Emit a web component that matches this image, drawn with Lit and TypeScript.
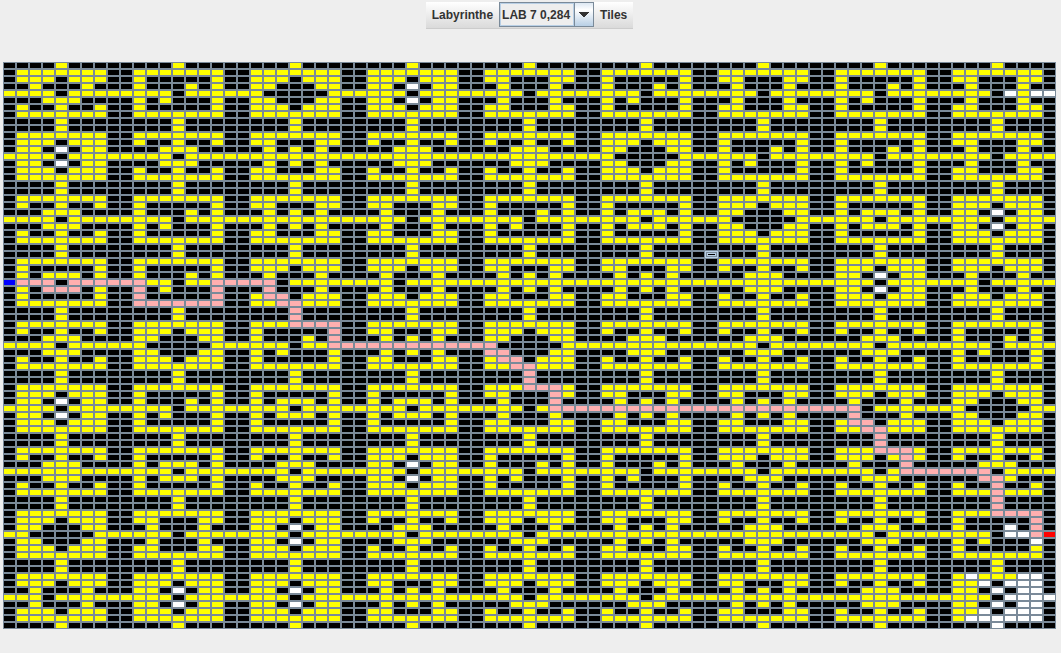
import { LitElement, html, css } from "lit";
import { customElement, state } from "lit/decorators.js";
import { classMap } from "lit/directives/class-map.js";

// Tile bodies: the five middle rows. Rows 0, 1, 7 and 8 are common to all tiles.
// '.' wall, '#' floor, 'W' unexplored floor, 'P' path, 'S' start, 'E' exit
const BODIES: Record<string, string[]> = {
  A: [".###.###.", "..#...#..", "####.####", "...###...", ".#..#..#."],
  B: [".#.....#.", ".#...#.#.", "####.####", ".#.#...#.", ".#.....#."],
  C: [".###.###.", ".##...##.", "##.....##", ".##...##.", ".###.###."],
  D: [".###.###.", ".##.W.##.", "####.####", ".##.W.##.", ".###.###."],
  E: [".#..#..#.", "...###...", "####.####", "...###...", ".#..#..#."],
  F: [".##...##.", "..#.#.#..", "#########", "..#.#.#..", ".##...##."],
  G: [".##...##.", "..#...#..", "####.####", "..#...#..", ".##...##."],
  H: [".#..#..#.", "...###...", "#########", "...###...", ".#..#..#."],
  I: [".#.....#.", ".#.###.#.", "####.####", ".#.###.#.", ".#.....#."],
  J: [".###.###.", "..#...#..", "###.#####", "..#...#..", ".###.###."],
};

const LAYOUT = [
  "ABCDGBGBG",
  "DEFHHCBBG",
  "EBFGBICID",
  "IBJJFFHDJ",
  "ECBFCHEEB",
  "DBIIGFFJC",
  "HIEDBBAAE",
  "CGDEAFHEB",
  "JDDFAAFHD",
];

// Rows of single tiles changed by the walk through the maze: "tileRow,tileCol" -> row -> cells
const WALK: Record<string, Record<number, string>> = {
  "0,8": { 4: "####.W#WW" },
  "3,0": { 4: "SPPP.PPPP", 5: ".#.PPP.#." },
  "3,1": { 4: "PP##.##PP", 5: ".P.#...P.", 6: ".P.....P.", 7: ".PPPPPPP." },
  "3,2": { 4: "PPP.#####", 5: "..P...#..", 6: ".#PP.###.", 7: ".##PP###.", 8: "....P...." },
  "4,2": { 0: "....P....", 1: ".###PPPP.", 2: ".#.....P.", 3: ".#...#.P.", 4: "####.##PP" },
  "4,3": { 4: "PPPPPPPPP" },
  "4,4": { 4: "PP.....##", 5: ".PP...##.", 6: ".#PP.###.", 7: ".##PP###.", 8: "....P...." },
  "5,4": { 0: "....P....", 1: ".###PPP#.", 2: ".##...P#.", 3: "..#...P..", 4: "####.#PPP" },
  "5,5": { 4: "PPPPPPPPP" },
  "5,6": { 4: "PPPPPPPPP" },
  "5,7": { 4: "PPP.#####", 5: "..P...#..", 6: ".#PP.###.", 7: ".##PP###.", 8: "....P...." },
  "6,7": { 0: "....P....", 1: ".###PPP#.", 2: ".###.#P#.", 3: "..#...P..", 4: "####.#PPP" },
  "6,8": { 4: "PPPP.####", 5: "...PP#...", 6: ".#..P..#.", 7: ".###P###.", 8: "....P...." },
  "7,8": { 0: "....P....", 1: ".###PPPP.", 2: ".#.....P.", 3: ".#...W.P.", 4: "####.WWPE", 5: ".#.#...W." },
  "8,8": {
    1: ".#W###WW.", 2: ".##W.WWW.", 3: ".##.W.WW.", 4: "####.WWWW",
    5: ".##.W.WW.", 6: ".##W.WWW.", 7: ".#WWWWWW.", 8: "....W....",
  },
};

const SIZE = 81;

function buildMaze(): string {
  let cells = "";
  for (let y = 0; y < SIZE; y++) {
    const tr = Math.floor(y / 9);
    for (let tc = 0; tc < 9; tc++) {
      const edge = "....#....";
      const ring = ".#######.";
      const rows = [edge, ring, ...BODIES[LAYOUT[tr][tc]], ring, edge];
      cells += WALK[`${tr},${tc}`]?.[y % 9] ?? rows[y % 9];
    }
  }
  return cells;
}

@customElement("maze-board")
export class MazeBoard extends LitElement {
  @state() private current = 27 * SIZE + 54;
  private cells = buildMaze();

  static styles = css`
    :host {
      display: block;
    }
    .board {
      display: grid;
      grid-template-columns: repeat(81, 1fr);
      grid-auto-rows: 7px;
    }
    .cell {
      display: block;
      box-sizing: border-box;
      min-width: 0;
      margin: 0;
      padding: 0;
      border: 1px solid #7a8a99;
      border-radius: 0;
      background: #000;
      outline: none;
    }
    .floor { background: #ff0; }
    .open { background: #fff; }
    .path { background: #ffafaf; }
    .start { background: #00f; }
    .exit { background: #f00; }
    .current {
      border-color: #b8cfe5;
      box-shadow: inset 0 0 0 1px #7a8a99, inset 0 0 0 2px #b8cfe5;
    }
  `;

  private pick(e: Event) {
    const i = (e.target as HTMLElement).dataset.i;
    if (i) this.current = Number(i);
  }

  render() {
    return html`<div class="board" @click=${this.pick}>
      ${Array.from(this.cells, (c, i) => html`<button
        type="button"
        data-i=${i}
        class=${classMap({
          cell: true,
          floor: c === "#",
          open: c === "W",
          path: c === "P",
          start: c === "S",
          exit: c === "E",
          current: i === this.current,
        })}
      ></button>`)}
    </div>`;
  }
}

@customElement("app-root")
export class AppRoot extends LitElement {
  static styles = css`
    :host {
      display: block;
      min-height: 100vh;
      background: #eee;
      color: #333;
      font: bold 12px/16px "Liberation Sans", Arial, sans-serif;
    }
    .bar {
      display: flex;
      justify-content: center;
      padding: 0 2px 33px 0;
    }
    .menu {
      display: flex;
      align-items: center;
      box-sizing: border-box;
      height: 29px;
      padding: 0 6px;
      gap: 6px;
      background: linear-gradient(#fff, #dadada);
      border-top: 2px solid #eee;
      border-bottom: 1px solid #ccc;
    }
    .combo {
      display: grid;
      grid-template-columns: 1fr 19px;
      align-self: flex-start;
      box-sizing: border-box;
      width: 95px;
      height: 25px;
      border: 1px solid #7a8a99;
    }
    .select {
      grid-area: 1 / 1 / 2 / 3;
      appearance: none;
      box-sizing: border-box;
      width: 100%;
      margin: 0;
      padding: 0 20px 0 1px;
      border: 1px solid #b8cfe5;
      border-radius: 0;
      background: #eee;
      color: inherit;
      font: inherit;
      outline: none;
    }
    .arrow {
      grid-area: 1 / 2;
      z-index: 1;
      pointer-events: none;
      display: grid;
      place-items: center;
      border-left: 1px solid #7a8a99;
      box-shadow: -1px 0 #b8cfe5;
      background: linear-gradient(#dde8f3, #fff 30%, #b8cfe5);
    }
    .text {
      padding: 0;
      border: 0;
      background: none;
      color: inherit;
      font: inherit;
    }
    .stage {
      padding: 0 5px 24px 3px;
    }
  `;

  render() {
    return html`
      <header class="bar">
        <div class="menu">
          <label for="maze">Labyrinthe</label>
          <div class="combo">
            <select id="maze" class="select">
              <option>LAB 7 0,284</option>
            </select>
            <span class="arrow">
              <svg width="10" height="5" viewBox="0 0 10 5">
                <path d="M0 0H10V1H9V2H8V3H7V4H6V5H4V4H3V3H2V2H1V1H0Z" fill="#333" />
              </svg>
            </span>
          </div>
          <button type="button" class="text">Tiles</button>
        </div>
      </header>
      <main class="stage"><maze-board></maze-board></main>
    `;
  }
}
